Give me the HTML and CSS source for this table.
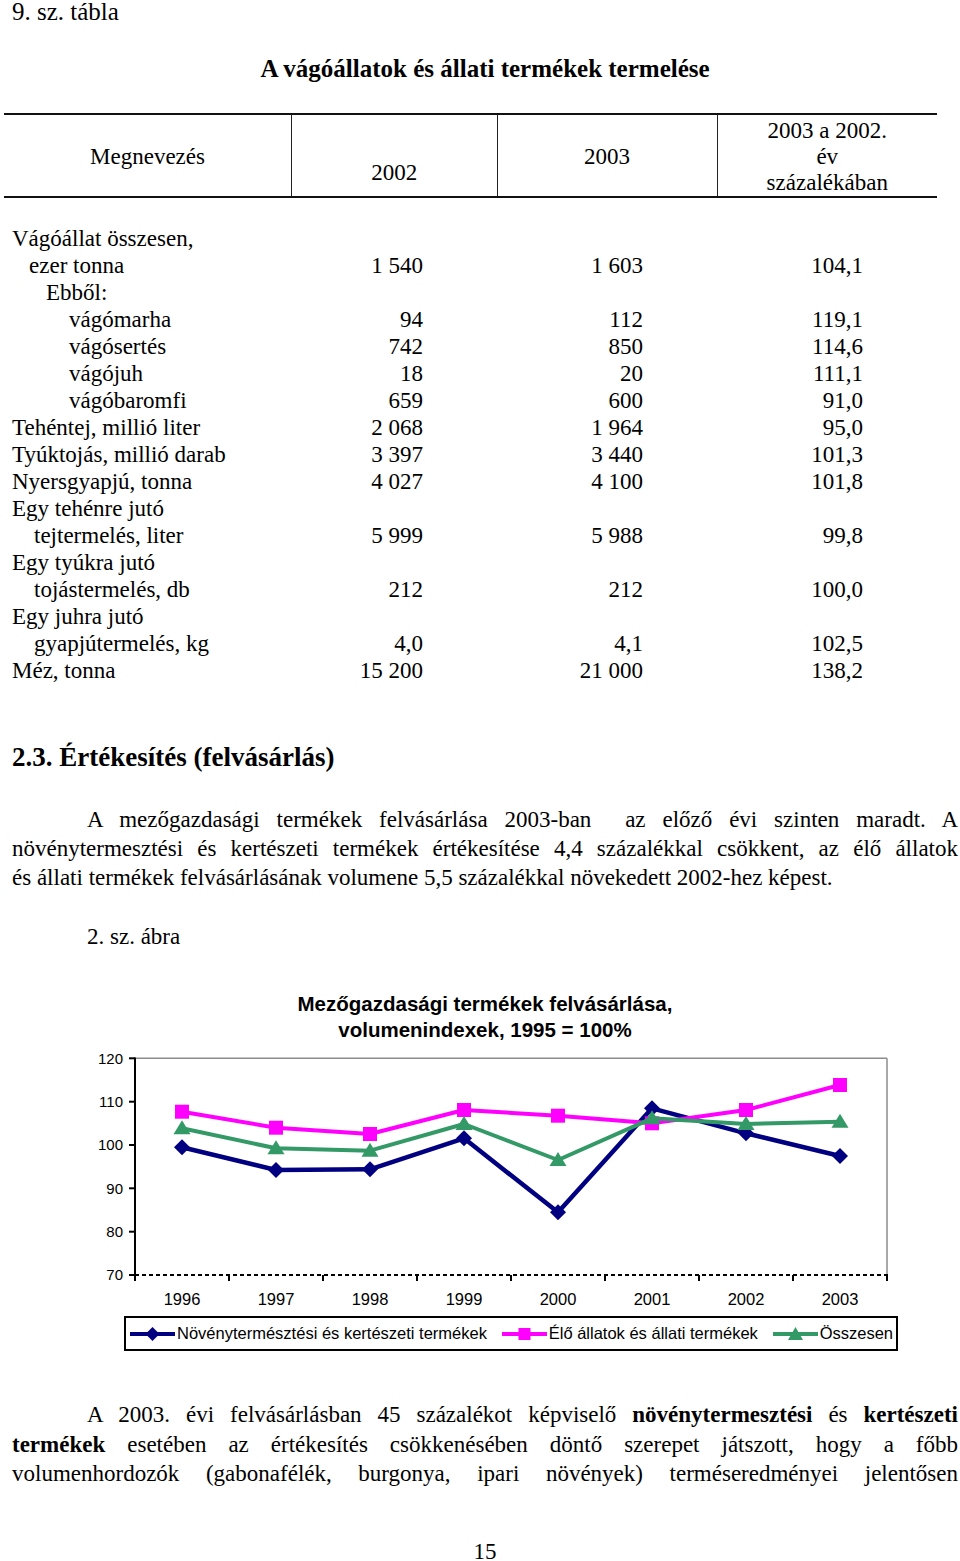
FILE: index.html
```html
<!DOCTYPE html>
<html lang="hu">
<head>
<meta charset="utf-8">
<title>A vágóállatok és állati termékek termelése</title>
<link rel="stylesheet" href="styles.css">
</head>
<body>
<div class="page">
  <p class="table-label">9. sz. tábla</p>
  <h1 class="table-title">A vágóállatok és állati termékek termelése</h1>

  <table class="data">
    <colgroup>
      <col class="c-name"><col class="c-num1"><col class="c-num2"><col class="c-num3">
    </colgroup>
    <thead>
      <tr>
        <th class="h-mid">Megnevezés</th>
        <th class="h-low">2002</th>
        <th class="h-mid">2003</th>
        <th class="h-mid">2003 a 2002.<br>év<br>százalékában</th>
      </tr>
    </thead>
    <tbody>
      <tr class="spacer"><td colspan="4"></td></tr>
      <tr><td class="name">Vágóállat összesen,</td><td></td><td></td><td></td></tr>
      <tr><td class="name ind1">ezer tonna</td><td class="num">1 540</td><td class="num">1 603</td><td class="num">104,1</td></tr>
      <tr><td class="name ind2">Ebből:</td><td></td><td></td><td></td></tr>
      <tr><td class="name ind3">vágómarha</td><td class="num">94</td><td class="num">112</td><td class="num">119,1</td></tr>
      <tr><td class="name ind3">vágósertés</td><td class="num">742</td><td class="num">850</td><td class="num">114,6</td></tr>
      <tr><td class="name ind3">vágójuh</td><td class="num">18</td><td class="num">20</td><td class="num">111,1</td></tr>
      <tr><td class="name ind3">vágóbaromfi</td><td class="num">659</td><td class="num">600</td><td class="num">91,0</td></tr>
      <tr><td class="name">Tehéntej, millió liter</td><td class="num">2 068</td><td class="num">1 964</td><td class="num">95,0</td></tr>
      <tr><td class="name">Tyúktojás, millió darab</td><td class="num">3 397</td><td class="num">3 440</td><td class="num">101,3</td></tr>
      <tr><td class="name">Nyersgyapjú, tonna</td><td class="num">4 027</td><td class="num">4 100</td><td class="num">101,8</td></tr>
      <tr><td class="name">Egy tehénre jutó</td><td></td><td></td><td></td></tr>
      <tr><td class="name ind4">tejtermelés, liter</td><td class="num">5 999</td><td class="num">5 988</td><td class="num">99,8</td></tr>
      <tr><td class="name">Egy tyúkra jutó</td><td></td><td></td><td></td></tr>
      <tr><td class="name ind4">tojástermelés, db</td><td class="num">212</td><td class="num">212</td><td class="num">100,0</td></tr>
      <tr><td class="name">Egy juhra jutó</td><td></td><td></td><td></td></tr>
      <tr><td class="name ind4">gyapjútermelés, kg</td><td class="num">4,0</td><td class="num">4,1</td><td class="num">102,5</td></tr>
      <tr><td class="name">Méz, tonna</td><td class="num">15 200</td><td class="num">21 000</td><td class="num">138,2</td></tr>
    </tbody>
  </table>

  <h2 class="section">2.3. Értékesítés (felvásárlás)</h2>

  <p class="para para-1">
    <span class="line just first">A mezőgazdasági termékek felvásárlása 2003-ban&nbsp; az előző évi szinten maradt. A</span>
    <span class="line just">növénytermesztési és kertészeti termékek értékesítése 4,4 százalékkal csökkent, az élő állatok</span>
    <span class="line">és állati termékek felvásárlásának volumene 5,5 százalékkal növekedett 2002-hez képest.</span>
  </p>

  <p class="fig-label">2. sz. ábra</p>

  <div class="chart">
    <div class="chart-title">Mezőgazdasági termékek felvásárlása,<br>volumenindexek, 1995 = 100%</div>
    <svg class="plot" width="960" height="270" viewBox="0 1043 960 270" xmlns="http://www.w3.org/2000/svg">
      <defs>
        <path id="dia" d="M0,-8 L8,0 L0,8 L-8,0 Z" fill="#000080"/>
        <rect id="sq" x="-7" y="-7" width="14" height="14" fill="#ff00ff"/>
        <path id="tri" d="M0,-8 L8.5,6 L-8.5,6 Z" fill="#339966"/>
      </defs>
      <g class="frame">
        <line x1="135" y1="1058.3" x2="887" y2="1058.3" stroke="#8c8c8c" stroke-width="1.5"/>
        <line x1="887" y1="1058.3" x2="887" y2="1275" stroke="#8c8c8c" stroke-width="1.5"/>
        <line x1="135" y1="1057.5" x2="135" y2="1276" stroke="#000" stroke-width="2"/>
        <line x1="135" y1="1275" x2="888" y2="1275" stroke="#000" stroke-width="2" stroke-dasharray="4 3"/>
      </g>
      <g class="yticks" stroke="#000" stroke-width="2">
        <line x1="129" y1="1058.3" x2="135" y2="1058.3"/>
        <line x1="129" y1="1101.7" x2="135" y2="1101.7"/>
        <line x1="129" y1="1145" x2="135" y2="1145"/>
        <line x1="129" y1="1188.3" x2="135" y2="1188.3"/>
        <line x1="129" y1="1231.7" x2="135" y2="1231.7"/>
        <line x1="129" y1="1275" x2="135" y2="1275"/>
      </g>
      <g class="xticks" stroke="#000" stroke-width="2">
        <line x1="135" y1="1275" x2="135" y2="1281"/>
        <line x1="229" y1="1275" x2="229" y2="1281"/>
        <line x1="323" y1="1275" x2="323" y2="1281"/>
        <line x1="417" y1="1275" x2="417" y2="1281"/>
        <line x1="511" y1="1275" x2="511" y2="1281"/>
        <line x1="605" y1="1275" x2="605" y2="1281"/>
        <line x1="699" y1="1275" x2="699" y2="1281"/>
        <line x1="793" y1="1275" x2="793" y2="1281"/>
        <line x1="887" y1="1275" x2="887" y2="1281"/>
      </g>
      <g class="ylabels" text-anchor="end">
        <text x="123" y="1063.5">120</text>
        <text x="123" y="1106.9">110</text>
        <text x="123" y="1150.2">100</text>
        <text x="123" y="1193.5">90</text>
        <text x="123" y="1236.9">80</text>
        <text x="123" y="1280.2">70</text>
      </g>
      <g class="xlabels" text-anchor="middle">
        <text x="182" y="1305">1996</text>
        <text x="276" y="1305">1997</text>
        <text x="370" y="1305">1998</text>
        <text x="464" y="1305">1999</text>
        <text x="558" y="1305">2000</text>
        <text x="652" y="1305">2001</text>
        <text x="746" y="1305">2002</text>
        <text x="840" y="1305">2003</text>
      </g>
      <g class="series-navy">
        <polyline fill="none" stroke="#000080" stroke-width="4.5" stroke-linejoin="round"
          points="182,1147.3 276,1170 370,1169.3 464,1138.3 558,1212.3 652,1108.3 746,1133.3 840,1156"/>
        <use href="#dia" x="182" y="1147.3"/><use href="#dia" x="276" y="1170"/>
        <use href="#dia" x="370" y="1169.3"/><use href="#dia" x="464" y="1138.3"/>
        <use href="#dia" x="558" y="1212.3"/><use href="#dia" x="652" y="1108.3"/>
        <use href="#dia" x="746" y="1133.3"/><use href="#dia" x="840" y="1156"/>
      </g>
      <g class="series-magenta">
        <polyline fill="none" stroke="#ff00ff" stroke-width="4" stroke-linejoin="round"
          points="182,1111.7 276,1127.7 370,1134 464,1110 558,1115.7 652,1123.3 746,1110 840,1085"/>
        <use href="#sq" x="182" y="1111.7"/><use href="#sq" x="276" y="1127.7"/>
        <use href="#sq" x="370" y="1134"/><use href="#sq" x="464" y="1110"/>
        <use href="#sq" x="558" y="1115.7"/><use href="#sq" x="652" y="1123.3"/>
        <use href="#sq" x="746" y="1110"/><use href="#sq" x="840" y="1085"/>
      </g>
      <g class="series-green">
        <polyline fill="none" stroke="#339966" stroke-width="4" stroke-linejoin="round"
          points="182,1128.3 276,1148.3 370,1150.7 464,1124 558,1160 652,1118.3 746,1124 840,1121.7"/>
        <use href="#tri" x="182" y="1128.3"/><use href="#tri" x="276" y="1148.3"/>
        <use href="#tri" x="370" y="1150.7"/><use href="#tri" x="464" y="1124"/>
        <use href="#tri" x="558" y="1160"/><use href="#tri" x="652" y="1118.3"/>
        <use href="#tri" x="746" y="1124"/><use href="#tri" x="840" y="1121.7"/>
      </g>
    </svg>
    <div class="legend">
      <span class="legend-item">
        <svg class="legend-key" width="45" height="16" viewBox="0 0 45 16"><line x1="0" y1="8" x2="45" y2="8" stroke="#000080" stroke-width="4"/><path d="M22.5,1 L29.5,8 L22.5,15 L15.5,8 Z" fill="#000080"/></svg>Növénytermésztési és kertészeti termékek
      </span>
      <span class="legend-item">
        <svg class="legend-key" width="45" height="16" viewBox="0 0 45 16"><line x1="0" y1="8" x2="45" y2="8" stroke="#ff00ff" stroke-width="4"/><rect x="16.5" y="2" width="12" height="12" fill="#ff00ff"/></svg>Élő állatok és állati termékek
      </span>
      <span class="legend-item">
        <svg class="legend-key" width="45" height="16" viewBox="0 0 45 16"><line x1="0" y1="8" x2="45" y2="8" stroke="#339966" stroke-width="4"/><path d="M22.5,1 L30,14 L15,14 Z" fill="#339966"/></svg>Összesen
      </span>
    </div>
  </div>

  <p class="para para-2">
    <span class="line just first">A 2003. évi felvásárlásban 45 százalékot képviselő <b>növénytermesztési</b> és <b>kertészeti</b></span>
    <span class="line just"><b>termékek</b> esetében az értékesítés csökkenésében döntő szerepet játszott, hogy a főbb</span>
    <span class="line just">volumenhordozók (gabonafélék, burgonya, ipari növények) terméseredményei jelentősen</span>
  </p>

  <p class="page-number">15</p>
</div>
</body>
</html>
```

FILE: styles.css
```css
html, body {
  margin: 0;
  padding: 0;
  background: #fff;
}

body {
  font-family: "Liberation Serif", "Times New Roman", serif;
  font-size: 23px;
  color: #000;
}

.page {
  width: 946px;
  padding: 0 2px 0 12px;
}

.table-label {
  margin: 0;
  font-size: 25px;
  line-height: 24px;
}

.table-title {
  margin: 30px 0 0;
  font-size: 25px;
  line-height: 30px;
  font-weight: bold;
  text-align: center;
}

/* ---------- table ---------- */
.data {
  margin: 29px 0 0 -8px;
  width: 933px;
  border-collapse: collapse;
  table-layout: fixed;
  font-size: 23px;
}

.c-name { width: 287.5px; }
.c-num1 { width: 205.5px; }
.c-num2 { width: 220px; }
.c-num3 { width: 220px; }

.data th {
  font-weight: normal;
  height: 78px;
  padding: 3px 0 0;
  line-height: 26px;
  text-align: center;
  border-top: 2px solid #111;
  border-bottom: 2px solid #111;
}

.data th + th {
  border-left: 1.5px solid #222;
}

.data th.h-mid { vertical-align: middle; }
.data th.h-low { vertical-align: bottom; padding-bottom: 10px; height: 68px; }

.data td {
  padding: 0;
  height: 27px;
  line-height: 27px;
  white-space: nowrap;
}

.data .spacer td {
  height: 26.5px;
}

.data td.name { padding-left: 8px; }
.data td.ind1 { padding-left: 25px; }
.data td.ind2 { padding-left: 42px; }
.data td.ind3 { padding-left: 65px; }
.data td.ind4 { padding-left: 30px; }

.data td.num {
  text-align: right;
  padding-right: 74px;
}

/* ---------- text ---------- */
.section {
  margin: 57.5px 0 0;
  font-size: 27px;
  line-height: 32px;
  font-weight: bold;
}

.para {
  margin: 0;
  line-height: 29px;
}

.para .line {
  display: block;
}

.para .line.just {
  text-align: justify;
  text-align-last: justify;
}

.para .line.first {
  padding-left: 75px;
}

.para-1 { margin-top: 31.5px; }

.para-2 {
  margin-top: 49px;
  line-height: 29.5px;
}

.fig-label {
  margin: 30px 0 0;
  padding-left: 75px;
  line-height: 29px;
}

.page-number {
  margin: 54px 0 0;
  line-height: 18px;
  text-align: center;
}

/* ---------- chart ---------- */
.chart {
  font-family: "Liberation Sans", Arial, sans-serif;
}

.chart-title {
  margin-top: 40.5px;
  font-size: 20.5px;
  font-weight: bold;
  line-height: 26px;
  text-align: center;
}

.plot {
  display: block;
  margin-left: -12px;
}

.plot text {
  font-family: "Liberation Sans", Arial, sans-serif;
  fill: #000;
}

.ylabels text { font-size: 15px; }
.xlabels text { font-size: 16.5px; }

.legend {
  box-sizing: border-box;
  margin: 3px 0 0 112px;
  width: 774px;
  height: 35px;
  border: 2px solid #000;
  padding: 0 3px 0 4px;
  display: flex;
  align-items: center;
  justify-content: space-between;
  font-size: 16.5px;
  white-space: nowrap;
}

.legend-item {
  display: flex;
  align-items: center;
}

.legend-key {
  display: block;
  margin-right: 2px;
}
```
